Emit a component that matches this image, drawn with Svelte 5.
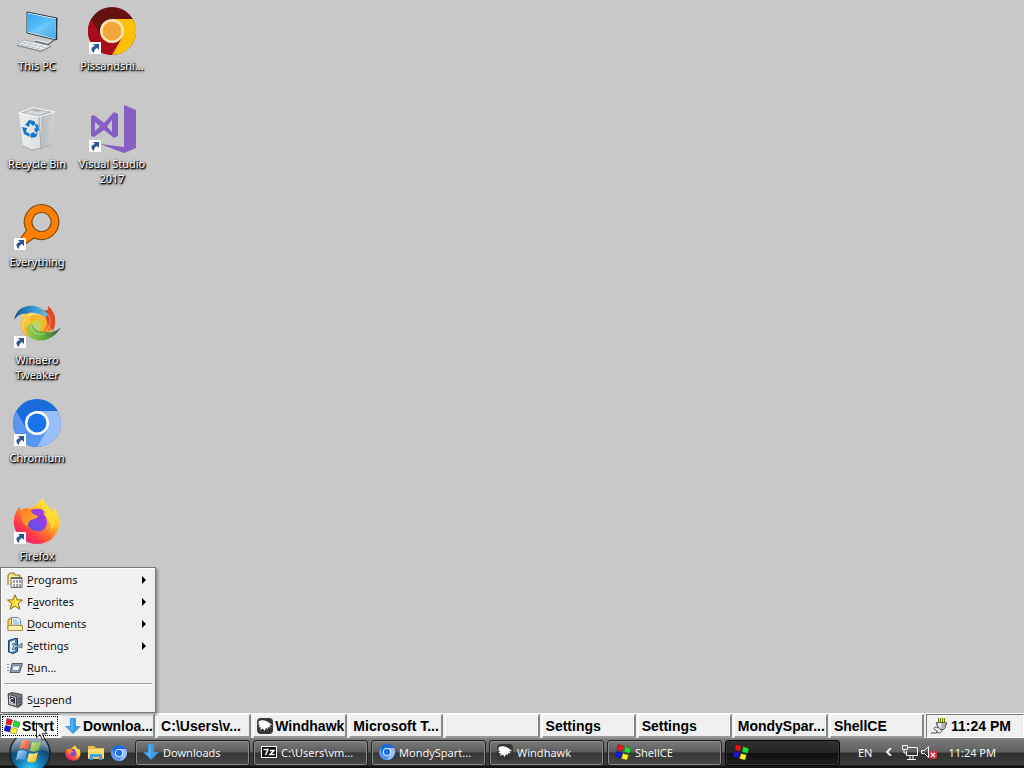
<script>
  const columns = [
    [
      { icon: 'pc', label: 'This PC' },
      { icon: 'bin', label: 'Recycle Bin' },
      { icon: 'everything', label: 'Everything', shortcut: true },
      { icon: 'winaero', label: 'Winaero Tweaker', shortcut: true },
      { icon: 'chromium', label: 'Chromium', shortcut: true },
      { icon: 'firefox', label: 'Firefox', shortcut: true }
    ],
    [
      { icon: 'canary', label: 'Pissandshi...', shortcut: true },
      { icon: 'vs', label: 'Visual Studio 2017', shortcut: true }
    ]
  ];

  const menu = [
    { icon: 'programs', pre: '', key: 'P', post: 'rograms', sub: true },
    { icon: 'favorites', pre: 'F', key: 'a', post: 'vorites', sub: true },
    { icon: 'documents', pre: '', key: 'D', post: 'ocuments', sub: true },
    { icon: 'settings', pre: '', key: 'S', post: 'ettings', sub: true },
    { icon: 'run', pre: '', key: 'R', post: 'un...' },
    { icon: 'suspend', pre: 'S', key: 'u', post: 'spend', separated: true }
  ];

  const classicTasks = [
    { icon: 'download', label: 'Downloa...' },
    { label: 'C:\\Users\\v...' },
    { icon: 'windhawk', label: 'Windhawk' },
    { label: 'Microsoft T...' },
    { label: '' },
    { label: 'Settings' },
    { label: 'Settings' },
    { label: 'MondySpar...' },
    { label: 'ShellCE' }
  ];

  const tasks = [
    { icon: 'download', label: 'Downloads' },
    { icon: 'sevenzip', label: 'C:\\Users\\vm...' },
    { icon: 'chromium', label: 'MondySpart...' },
    { icon: 'windhawk', label: 'Windhawk' },
    { icon: 'flag', label: 'ShellCE' },
    { icon: 'flag', label: '', active: true }
  ];

  const quick = [
    { icon: 'firefox', label: 'Firefox' },
    { icon: 'folder', label: 'File Explorer' },
    { icon: 'chromium', label: 'Chromium' }
  ];

  let menuOpen = $state(true);
</script>

<svg class="defs" width="0" height="0" aria-hidden="true">
  <defs>
    <linearGradient id="g-screen" x1="0" y1="0" x2="1" y2="1">
      <stop offset="0" stop-color="#35a5ee" /><stop offset=".5" stop-color="#5cc0fa" /><stop offset="1" stop-color="#2e9eea" />
    </linearGradient>
    <linearGradient id="g-bin" x1="0" y1="0" x2="1" y2="0">
      <stop offset="0" stop-color="#eceeef" /><stop offset=".6" stop-color="#dcdfe1" /><stop offset=".63" stop-color="#b9bdc0" /><stop offset="1" stop-color="#cfd2d4" />
    </linearGradient>
    <linearGradient id="g-wblue" x1="0" y1="0" x2="1" y2="0">
      <stop offset="0" stop-color="#1d5583" /><stop offset=".5" stop-color="#2d8fd0" /><stop offset="1" stop-color="#6cc0d0" />
    </linearGradient>
    <linearGradient id="g-wred" x1="0" y1="0" x2="0" y2="1">
      <stop offset="0" stop-color="#b92c2a" /><stop offset=".4" stop-color="#e34a26" /><stop offset="1" stop-color="#f8a52a" />
    </linearGradient>
    <linearGradient id="g-wgreen" x1="0" y1="0" x2="1" y2="0">
      <stop offset="0" stop-color="#9bd04a" /><stop offset=".5" stop-color="#5fae38" /><stop offset="1" stop-color="#3c5a45" />
    </linearGradient>
    <linearGradient id="g-wyellow" x1="0" y1="0" x2="0" y2="1">
      <stop offset="0" stop-color="#f9d74c" /><stop offset="1" stop-color="#f2a92e" />
    </linearGradient>
    <linearGradient id="g-fox" x1=".85" y1=".1" x2=".2" y2=".9">
      <stop offset="0" stop-color="#fff04c" /><stop offset=".3" stop-color="#ffc52c" /><stop offset=".55" stop-color="#ff7d28" /><stop offset=".8" stop-color="#ff3b4a" /><stop offset="1" stop-color="#e92071" />
    </linearGradient>
    <linearGradient id="g-foxcore" x1="1" y1="0" x2="0" y2="1">
      <stop offset="0" stop-color="#b833e1" /><stop offset=".5" stop-color="#8544e8" /><stop offset="1" stop-color="#5158d6" />
    </linearGradient>
    <linearGradient id="g-foxhead" x1="0" y1="0" x2="1" y2="1">
      <stop offset="0" stop-color="#ff7a24" /><stop offset="1" stop-color="#ffb02e" />
    </linearGradient>
    <radialGradient id="g-orb" cx=".5" cy=".9" r=".9">
      <stop offset="0" stop-color="#35d0ff" /><stop offset=".3" stop-color="#1685bd" /><stop offset=".65" stop-color="#14466c" /><stop offset="1" stop-color="#5e8098" />
    </radialGradient>
    <linearGradient id="g-gloss" x1="0" y1="0" x2="0" y2="1">
      <stop offset="0" stop-color="#fff" stop-opacity=".65" /><stop offset="1" stop-color="#fff" stop-opacity=".1" />
    </linearGradient>
    <linearGradient id="g-or" x1="0" y1="0" x2="1" y2="1"><stop offset="0" stop-color="#ffb59a" /><stop offset="1" stop-color="#dd4312" /></linearGradient>
    <linearGradient id="g-og" x1="0" y1="0" x2="1" y2="1"><stop offset="0" stop-color="#d7ef9c" /><stop offset="1" stop-color="#64a526" /></linearGradient>
    <linearGradient id="g-ob" x1="0" y1="0" x2="1" y2="1"><stop offset="0" stop-color="#b9e4ff" /><stop offset="1" stop-color="#2577ca" /></linearGradient>
    <linearGradient id="g-oy" x1="0" y1="0" x2="1" y2="1"><stop offset="0" stop-color="#fff2a0" /><stop offset="1" stop-color="#f4b411" /></linearGradient>
  </defs>
</svg>

{#snippet glyph(name)}
  {#if name === 'pc'}
    <svg viewBox="0 0 48 48" aria-hidden="true">
      <path d="M14 5 44 11 43 33 14 26Z" fill="#e8f4fc" stroke="#2b3d4a" />
      <path d="M15 6.500 42.500 12 42 31.500 15 25Z" fill="url(#g-screen)" />
      <path d="M15 25 42 12v19Z" fill="#fff" opacity=".12" />
      <path d="M43.500 11v22" stroke="#23313b" stroke-width="1.500" />
      <path d="M22 34 35 37.500 41 33" fill="none" stroke="#56636c" stroke-width="1.500" />
      <path d="M22 33 35 36 39 33" fill="none" stroke="#eef2f4" />
      <path d="M11 33 38 39 28 44 4 38Z" fill="#f1f3f4" stroke="#9aa1a5" stroke-width=".8" />
      <path d="M9 35 34 41M7 37 31 43M15 34 8 39M20 35 13 40M25 36 18 42M30 37.500 23 43" stroke="#b0b6ba" stroke-width=".8" />
      <path d="M4 38.500 28 44.500 38 39.500" fill="none" stroke="#7c858a" />
    </svg>
  {:else if name === 'bin'}
    <svg viewBox="0 0 48 48" aria-hidden="true">
      <path d="M6 8 26 12 42 7 38 40 19 45 10 41Z" fill="url(#g-bin)" />
      <path d="M6 8 20 2.500 42 7 26 12Z" fill="#b3b6b9" stroke="#f6f7f7" stroke-width="1.200" />
      <path d="M12 8 18 5l6 2 6-1 5 1-9 3Z" fill="#d5d8d9" />
      <path d="M26 12 28 44M10 41l9 4 10-2 9-3" fill="none" stroke="#a2a7aa" />
      <g fill="#1877c9">
        <path d="m12 20 4-5 5 1 2 3-3 2-3-3-1 4Z" />
        <path d="m22 20 3-1 1 6-3 3-2-4 2-1Z" />
        <path d="m9 22 5 1-1 4 3 1 1 4-6-3Z" />
        <path d="m17 29 4-2 1 2 3-1-2 4-5 1Z" />
      </g>
    </svg>
  {:else if name === 'everything'}
    <svg viewBox="0 0 48 48" aria-hidden="true">
      <path fill-rule="evenodd" d="M28.500 1.500a17.500 17.500 0 1 1-7.500 33.400L8 44 4 40 13.500 27.500A17.500 17.500 0 0 1 28.500 1.500Zm0 8a9.500 9.500 0 1 0 .1 0Z" fill="#ff8000" stroke="#7c4a16" stroke-width="1.200" />
    </svg>
  {:else if name === 'winaero'}
    <svg viewBox="0 0 48 48" aria-hidden="true">
      <path d="M14 11C6 16 5 27 12 34c4 2 9 2 12 1-8-3-9-14 2-21Z" fill="url(#g-wyellow)" />
      <path d="M26 11C30 8 37 9 41 14c3 8-1 18-12 20-3-6 3-14-3-23Z" fill="url(#g-wred)" />
      <path d="M35 5c8 6 9 17 5 25-2-4-6-8-8-14 2-3 3-7 3-11Z" fill="#df4a28" />
      <path d="M1 19C4 3 23 0 35 13l-3 5C25 11 18 10 13 13 8 12 4 15 1 19Z" fill="url(#g-wblue)" />
      <path d="M16 16c8-5 17-3 18 5 0 5-3 9-8 10 2-5 1-9-8-9Z" fill="#f8b32c" />
      <path d="M48 26C41 40 23 44 15 34c-3-6 0-12 6-13-3 5 4 12 18 10 4-1 7-3 9-5Z" fill="url(#g-wgreen)" />
      <path d="M17 23c3-6 12-5 12 1 0 3-2 5-5 5 1-4-2-6-7-6Z" fill="#c5d44d" />
      <path d="M14 16c7-5 14-3 17 3M12 18c-4 6-2 12 2 15M18 24c-1 6 5 11 14 9M35 13c4 6 2 13-2 17" fill="none" stroke="#fff" opacity=".4" />
    </svg>
  {:else if name === 'chromium' || name === 'canary'}
    {@const c = name === 'canary' ? ['#661111', '#a90d1c', '#ffc107', '#f4a63a', '#fde8b8'] : ['#1a6bdc', '#5a95f1', '#99bffb', '#1a73e8', '#fff']}
    <svg viewBox="0 0 48 48" aria-hidden="true">
      <circle cx="24" cy="24" r="24" fill={c[0]} />
      <path d="M3.200 12A24 24 0 0 0 24 48L34.400 30 24 24 13.600 30Z" fill={c[1]} />
      <path d="M24 48A24 24 0 0 0 44.800 12H24l10.400 18Z" fill={c[2]} />
      <circle cx="24" cy="24" r="12" fill={c[4]} />
      <circle cx="24" cy="24" r="9.500" fill={c[3]} />
    </svg>
  {:else if name === 'vs'}
    <svg viewBox="0 0 48 48" aria-hidden="true">
      <path d="M36 0 48 5V43L36 48 12 39 36 42Z" fill="#865fc5" />
      <path fill-rule="evenodd" d="M3 11 6 10 16 18 26 7 30 9V31L26 33 16 25 6 32 3 31ZM7 17V26L12 21.500ZM24 15 19 21.500 24 27Z" fill="#865fc5" />
    </svg>
  {:else if name === 'firefox'}
    <svg viewBox="0 0 48 48" aria-hidden="true">
      <path d="M30 1c1 6 7 9 10 14 2-1 1-4 1-5 5 6 6 13 5 19C44 40 35 47 24 47S3 39 1 28c-1-8 2-14 6-19 0 2 0 4 1 5 2-2 5-3 8-3 5 0 8-5 14-10Z" fill="url(#g-fox)" />
      <path d="M14 24c-1-6 1-11 8-12 5-1 9 1 12 4l-4 1c3 2 4 5 4 9-1 6-5 9-10 8-6 0-10-5-10-10Z" fill="url(#g-foxcore)" />
      <path d="M7 14c5-4 10-3 13 3l5 2c-1 3-5 3-7 4-4 2-1 5-5 6-4-3-4-8-6-15Z" fill="url(#g-foxhead)" />
      <path d="M30 1c1 6 7 9 10 14 4 8 2 15-2 20 1-11-6-14-8-22-2-4-1-8 0-12Z" fill="#ffe033" opacity=".75" />
    </svg>
  {:else if name === 'flag'}
    <svg viewBox="0 0 16 16" aria-hidden="true">
      <path d="M3 .5 8.500 2 7 7 2 6Z" fill="#f2141d" stroke="#741219" stroke-width=".5" />
      <path d="M10 2.500 16 4.500 14.500 9.500 9 8Z" fill="#20df32" stroke="#155f21" stroke-width=".5" />
      <path d="M1.500 7.500 7 8.500 5.500 14 0 12.500Z" fill="#1717e3" stroke="#151573" stroke-width=".5" />
      <path d="M8 9.500 13.500 11 12 16 6.500 14.500Z" fill="#fffb22" stroke="#777018" stroke-width=".5" />
    </svg>
  {:else if name === 'download'}
    <svg viewBox="0 0 16 16" aria-hidden="true"><path d="M5 0h6v8h5l-8 8-8-8h5Z" fill="#3d9be4" /><path d="M6 1h2v13L3 9h3Z" fill="#54b0f0" /></svg>
  {:else if name === 'windhawk'}
    <svg viewBox="0 0 16 16" aria-hidden="true">
      <rect width="16" height="16" rx="4" fill="#353535" />
      <path d="M1 4C4 1 10 2 15 7l-3 .5 2 2-3-.5 0 2-2-1-1.500 3-1.500-2.500L3 12l1-2.500L1.500 9 3 7 0 6l2.500-.5Z" fill="#fff" />
    </svg>
  {:else if name === 'sevenzip'}
    <svg viewBox="0 0 16 16" aria-hidden="true"><path d="M0 2h16v12H0Z" fill="#fff" /><path d="M1 3h14v10H1Z" fill="#111" /><path d="M2.500 5.500H7L4.500 11M9 6.500h4l-4 4h4.500" fill="none" stroke="#fff" stroke-width="1.500" /></svg>
  {:else if name === 'folder'}
    <svg viewBox="0 0 16 16" aria-hidden="true"><path d="M0 1h6l2 2h8v11H0Z" fill="#eebc42" /><path d="M0 4h16v9H0Z" fill="#ffdc76" /><path d="M2 15V9h12v6h-3v-3H5v3Z" fill="#429ddb" /></svg>
  {:else if name === 'programs'}
    <svg viewBox="0 0 16 16" aria-hidden="true">
      <path d="M1 13V3l2-2h4l1 2h5v2" fill="#f4d779" stroke="#8b7424" /><path d="M2 4h9v9H2Z" fill="#fff0a0" />
      <path d="M4 5.500h11v10H4Z" fill="#f5f5ee" stroke="#696d70" /><path d="M4 5h11v2H4Z" fill="#626a70" />
      <path d="M6 8h2v3H6Zm3 0h2v3H9Zm3 0h2v3h-2ZM6 12h2v3H6Zm3 0h2v3H9Zm3 0h2v3h-2Z" fill="#9aa2a5" />
    </svg>
  {:else if name === 'favorites'}
    <svg viewBox="0 0 16 16" aria-hidden="true"><path d="m8 .8 2 5 5.500.2-4.300 3.500 1.600 5.700L8 12l-4.800 3.200 1.500-5.700L.5 6 6 5.800Z" fill="#ffd938" stroke="#8c6c10" /><path d="m8 3 1 4 4 0-3 2 1 4-3-2Z" fill="#ffec70" /></svg>
  {:else if name === 'documents'}
    <svg viewBox="0 0 16 16" aria-hidden="true">
      <path d="M1 14V4l2-2h4v12Z" fill="#f4d56b" stroke="#9a7c26" />
      <path d="M4.500 12V1.500H11L13.500 4v8Z" fill="#f5fcff" stroke="#5e8fa6" /><path d="M6 4h4M6 6h6M6 8h6" stroke="#6ba8c6" />
      <path d="M1 9.500h14.500v5H1Z" fill="#ffefad" stroke="#b0923c" />
    </svg>
  {:else if name === 'settings'}
    <svg viewBox="0 0 16 16" aria-hidden="true">
      <path d="M1.500 2.500 8 .5h2.500v13L6 15.500 1.500 14Z" fill="#4a83b5" stroke="#173f69" /><path d="M3 4 8 2v11l-5 1Z" fill="#e3f1fa" />
      <path d="m5 6 2-1 1 2h5l2-2v5l-2-1H9l-2 3-2-1 2-3Z" fill="#a9cde4" stroke="#2d506f" stroke-width=".8" />
    </svg>
  {:else if name === 'run'}
    <svg viewBox="0 0 16 16" aria-hidden="true"><path d="M5 3.500h10.500l-3 9H3Z" fill="#8ba1b9" stroke="#4b5d78" /><path d="M6 6h7l-1.500 4.500H5Z" fill="#f8fafc" stroke="#4e6888" stroke-width=".6" /><path d="M0 4.500h3M0 7.500h3M0 10.500h2" stroke="#7790a5" stroke-dasharray="2 1" /></svg>
  {:else if name === 'suspend'}
    <svg viewBox="0 0 16 16" aria-hidden="true"><path d="m1 2 4-1.500 10 2v10L11 15.500l-9-3Z" fill="#777985" stroke="#32343a" stroke-width=".8" /><path d="m1.500 2.500 8 2v10l-8-2Z" fill="#c7c8ce" stroke="#484a52" /><path d="m3 4.500 5 1.300v6L3 10.500Z" fill="#2d2e42" /><path d="M6.500 7a2 2 0 1 0 0 3" fill="none" stroke="#eef" /><path d="m11 14 3-2M11 11l3-2M11 8l3-2" stroke="#353640" /></svg>
  {/if}
{/snippet}

<div class="screen">
  <main class="desktop">
    {#each columns as column}
      <div class="column">
        {#each column as item}
          <a class="shortcut" href="#open">
            <span class="big">
              {@render glyph(item.icon)}
              {#if item.shortcut}
                <svg class="link" viewBox="0 0 12 12" aria-hidden="true"><path d="M0 0h12v12H0Z" fill="#fff" /><path d="M4 2h6v6L8 6C6 7 5 8 5 11 1 8 2 5 6 4Z" fill="#2d5593" /></svg>
              {/if}
            </span>
            <span class="label">{item.label}</span>
          </a>
        {/each}
      </div>
    {/each}
  </main>

  <div class="classic">
    {#if menuOpen}
      <nav class="menu">
        {#each menu as entry}
          {#if entry.separated}<hr />{/if}
          <button class="entry">
            <span class="small">{@render glyph(entry.icon)}</span>
            <span class="text">{entry.pre}<u>{entry.key}</u>{entry.post}</span>
            {#if entry.sub}<svg class="more" viewBox="0 0 4 8" aria-hidden="true"><path d="M0 0v8l4-4Z" /></svg>{/if}
          </button>
        {/each}
      </nav>
    {/if}
    <button class="start" onclick={() => (menuOpen = !menuOpen)}>
      <span class="small">{@render glyph('flag')}</span>Start
      <svg class="cursor" viewBox="0 0 12 19" aria-hidden="true"><path d="M.5.700v15l3.500-3.300 2.400 5.800 2.300-1-2.400-5.500h4.900Z" fill="#fff" stroke="#111" stroke-width=".9" /></svg>
    </button>
    <div class="classic-tasks">
      {#each classicTasks as task}
        <button class="classic-task" aria-label={task.label || 'Window'}>
          {#if task.icon}<span class="small">{@render glyph(task.icon)}</span>{/if}{task.label}
        </button>
      {/each}
    </div>
    <div class="classic-tray">
      <svg class="plug" viewBox="0 0 16 16" aria-hidden="true">
        <path d="M8.500 0v5M12.500 0v5" stroke="#777500" stroke-width="3" /><path d="M8.500 0v5M12.500 0v5" stroke="#e9e83c" />
        <path d="M5.500 4.500h10v2h-1v3l-2 2H9l-2.500-3v-2h-1Z" fill="#b7b7b7" stroke="#444" stroke-width=".8" /><path d="M7 5h3v5L7.500 8Z" fill="#f2f2f2" />
        <path d="M11 11.500c0 4-4 4-6 2M7 9.500C4 8 2 10 3.500 11.500s4 1.500 2.500 3-4-.5-6 .8" fill="none" stroke="#444" />
      </svg>
      <time>11:24 PM</time>
    </div>
  </div>

  <footer class="taskbar">
    <button class="orb" aria-label="Start">
      <svg viewBox="0 0 42 42" aria-hidden="true">
        <circle cx="21" cy="21" r="20" fill="url(#g-orb)" stroke="#14232e" stroke-width="1.500" />
        <path d="M2 20A19 19 0 0 1 40 20C29 15 13 23 2 20Z" fill="url(#g-gloss)" />
        <path d="M13 9c3-2 6-1 8 0l-2 9c-3-2-6-2-9-1Z" fill="url(#g-or)" />
        <path d="M23 10c3 1 6 1 9-1l-2 9c-3 2-6 2-9 1Z" fill="url(#g-og)" />
        <path d="M9 19c3-1 6-1 9 1l-2 9c-3-2-6-2-9-1Z" fill="url(#g-ob)" />
        <path d="M20 21c3 1 6 1 9-1l-2 9c-3 2-6 2-9 0Z" fill="url(#g-oy)" />
      </svg>
    </button>
    <div class="quick">
      {#each quick as item}
        <button aria-label={item.label}><span class="small">{@render glyph(item.icon)}</span></button>
      {/each}
    </div>
    <div class="tasks">
      {#each tasks as task}
        <button class="task" class:active={task.active} aria-label={task.label || 'Window'}>
          <span class="small">{@render glyph(task.icon)}</span>{task.label}
        </button>
      {/each}
    </div>
    <div class="tray">
      <span class="lang">EN</span>
      <button aria-label="Show hidden icons"><svg class="chevron" viewBox="0 0 7 8" aria-hidden="true"><path d="M6 0 2 4l4 4" fill="none" stroke="#eee" stroke-width="2" /></svg></button>
      <svg class="net" viewBox="0 0 16 16" aria-hidden="true"><path d="M5 3.500h10.500v8H4.500V7M8 12v3M11 12v3M5 15.500h9M.5 1.500h5v4h-5ZM2 6v3h2.500" fill="none" stroke="#f5f5f5" /></svg>
      <svg class="volume" viewBox="0 0 17 16" aria-hidden="true"><path d="M.5 6.500h3l4-4v11l-4-4h-3Z" fill="none" stroke="#f5f5f5" /><rect x="8" y="7" width="8" height="8" rx="2" fill="#da2f3c" /><path d="m10 9 4 4m0-4-4 4" stroke="#fff" stroke-width="1.200" /></svg>
      <time>11:24 PM</time>
    </div>
  </footer>
</div>

<style>
  :global(body) {
    margin: 0;
    background: #c8c8c8;
  }
  .screen {
    display: flex;
    flex-direction: column;
    height: 100vh;
    overflow: hidden;
    font: 11px/15px 'Noto Sans', 'Open Sans', sans-serif;
    color: #111;
  }
  button {
    font: inherit;
    color: inherit;
    margin: 0;
    padding: 0;
    border: 0;
    background: none;
    white-space: nowrap;
  }
  svg {
    display: block;
    flex: none;
  }
  .defs {
    position: absolute;
  }
  .small {
    display: block;
    flex: none;
    width: 16px;
    height: 16px;
  }
  .desktop {
    flex: 1;
    min-height: 0;
    display: flex;
  }
  .column {
    display: grid;
    grid-auto-rows: 98px;
    align-content: start;
    width: 75px;
  }
  .shortcut {
    display: flex;
    flex-direction: column;
    align-items: center;
    gap: 3px;
    padding: 7px 1px 0 0;
    color: #fff;
    text-decoration: none;
    text-align: center;
  }
  .big {
    position: relative;
    width: 48px;
    height: 48px;
  }
  .link {
    position: absolute;
    left: 1px;
    bottom: 1px;
    width: 12px;
    height: 12px;
  }
  .label {
    width: 72px;
    text-shadow: 1px 1px 1px #000, 1px 1px 2px #000, 0 1px 3px #000;
  }
  .classic {
    position: relative;
    display: flex;
    box-sizing: border-box;
    height: 25px;
    background: #f0f0f0;
    border-top: 1px solid #fff;
    font: bold 14px/16px 'Liberation Sans', Arial, sans-serif;
    color: #000;
  }
  .menu {
    position: absolute;
    left: 0;
    bottom: 25px;
    box-sizing: border-box;
    width: 156px;
    padding: 1px 3px;
    background: #f0f0f0;
    border: 1px solid #777;
    box-shadow: inset 1px 1px #fff, 2px 2px 2px #6668;
    font: 11px/22px 'Noto Sans', 'Open Sans', sans-serif;
    color: #111;
  }
  .entry {
    display: flex;
    align-items: center;
    gap: 4px;
    width: 100%;
    height: 22px;
    padding: 0 6px 0 3px;
    text-align: left;
  }
  .text {
    flex: 1;
  }
  u {
    text-underline-offset: 2px;
  }
  .more {
    width: 4px;
    height: 8px;
  }
  hr {
    margin: 4px 0;
    border: 0;
    border-top: 1px solid #a0a0a0;
    border-bottom: 1px solid #fff;
  }
  .start {
    position: relative;
    display: flex;
    align-items: center;
    gap: 2px;
    width: 60px;
    box-sizing: border-box;
    padding-left: 3px;
    border: 1px solid #666;
    border-right-color: #fff;
    border-bottom-color: #fff;
    outline: 1px dotted #000;
    outline-offset: -3px;
    background: #f8f8f8;
  }
  .cursor {
    position: absolute;
    z-index: 3;
    left: 35px;
    top: 7px;
    width: 12px;
    height: 19px;
  }
  .classic-tasks {
    flex: 1;
    display: flex;
    gap: 2px;
    padding: 0 2px 0 1px;
    min-width: 0;
  }
  .classic-task {
    flex: 1;
    min-width: 0;
    display: flex;
    align-items: center;
    gap: 2px;
    overflow: hidden;
    padding-left: 3px;
    border: 1px solid #fff;
    border-right: 2px solid #888;
    border-bottom: 2px solid #999;
    background: #f0f0f0;
  }
  .classic-tray {
    display: flex;
    align-items: center;
    gap: 4px;
    box-sizing: border-box;
    width: 98px;
    padding-left: 4px;
    border: 1px solid #777;
    border-right-color: #fff;
    border-bottom-color: #fff;
    white-space: nowrap;
  }
  .plug {
    width: 16px;
    height: 16px;
  }
  .taskbar {
    display: flex;
    align-items: stretch;
    height: 30px;
    background: linear-gradient(#858585 0, #777 2px, #606060 14px, #303030 15px, #3b3b3b 27px, #111 28px, #111 100%);
    color: #f5f5f5;
  }
  .orb {
    width: 42px;
    height: 30px;
    margin-left: 9px;
    overflow: hidden;
  }
  .orb svg {
    width: 42px;
    height: 42px;
    margin-top: -6px;
  }
  .quick {
    display: flex;
    align-items: center;
    gap: 7px;
    margin-left: 14px;
  }
  .tasks {
    flex: 1;
    display: flex;
    gap: 3px;
    margin-left: 8px;
    padding: 2px 0;
    min-width: 0;
  }
  .task {
    flex: 0 1 115px;
    min-width: 0;
    box-sizing: border-box;
    display: flex;
    align-items: center;
    gap: 4px;
    overflow: hidden;
    padding: 0 0 2px 7px;
    border: 1px solid #222;
    border-radius: 3px;
    box-shadow: inset 0 0 0 1px #888;
    background: linear-gradient(#7b7b7b, #5d5d5d 45%, #363636 50%, #4a4a4a);
  }
  .active {
    border-color: #050505;
    box-shadow: inset 0 0 0 1px #333;
    background: linear-gradient(#303030, #242424 48%, #101010 52%, #1e1e1e);
  }
  .tray {
    display: flex;
    align-items: center;
    padding: 0 28px 2px 0;
    white-space: nowrap;
  }
  .lang {
    margin-right: 13px;
  }
  .chevron {
    width: 7px;
    height: 8px;
    margin-right: 10px;
  }
  .net {
    width: 16px;
    height: 16px;
    margin-right: 3px;
  }
  .volume {
    width: 17px;
    height: 16px;
    margin-right: 10px;
  }
</style>
